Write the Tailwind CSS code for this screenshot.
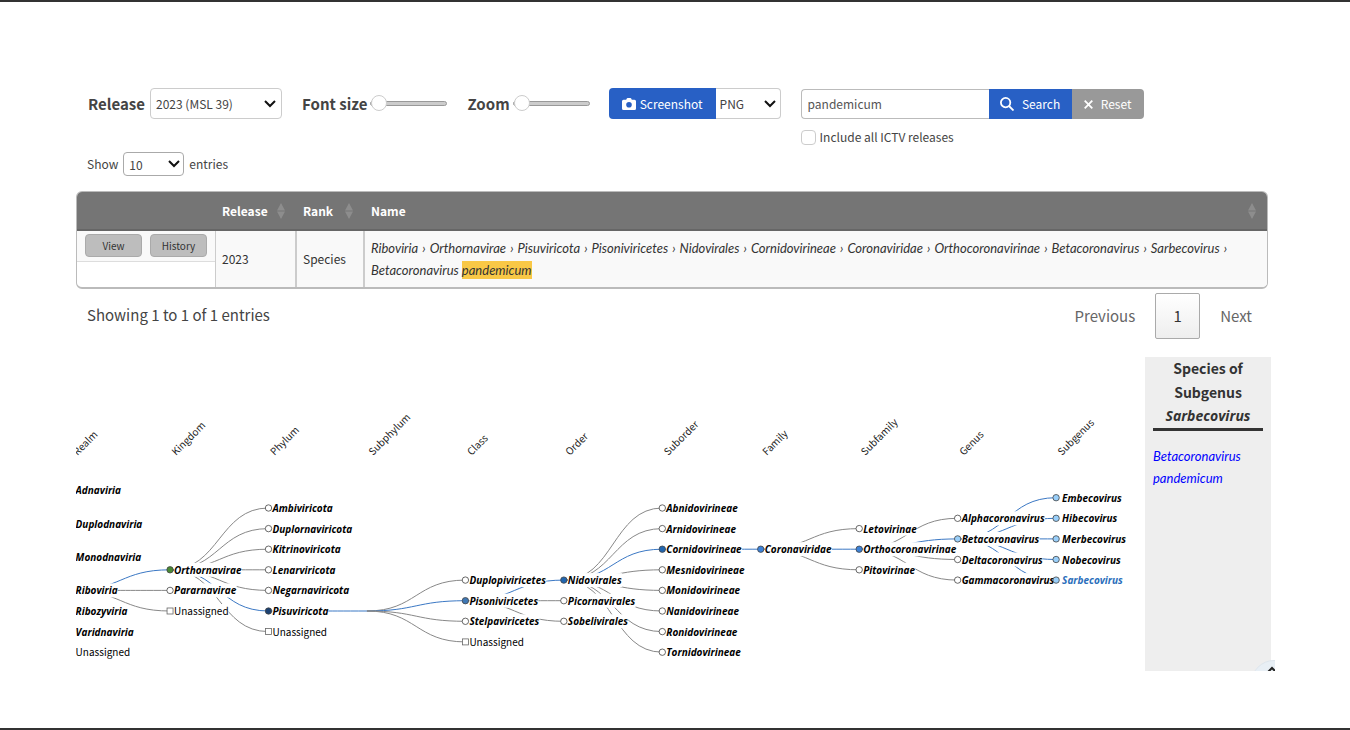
<!DOCTYPE html>
<html lang="en">
<head>
    <meta charset="UTF-8">
    <meta name="viewport" content="width=device-width, initial-scale=1.0">
    <title>Virus Taxonomy Browser</title>
    <script src="https://cdn.jsdelivr.net/npm/@tailwindcss/browser@4"></script>
</head>
<body class="min-h-screen flex flex-col bg-white border-y-2 border-[#333] font-['Noto_Sans_CJK_SC',sans-serif] text-xs text-[#444]">
    <main class="flex-1 pl-[76px] pr-[75px] pt-[86px]">

        <!-- Toolbar -->
        <div class="flex items-start pl-3">
            <label for="release" class="text-[15px] leading-[31px] font-bold">Release</label>
            <div class="relative ml-[5px]">
                <select id="release" class="appearance-none block w-[132px] h-[31px] pl-[5px] rounded border border-[#ccc] bg-white">
                    <option>2023 (MSL 39)</option>
                </select>
                <svg class="absolute right-[6px] top-[12px] w-3 h-2 pointer-events-none" viewBox="0 0 12 8" fill="none" stroke="#111" stroke-width="2"><path d="M1 1l5 5 5-5"/></svg>
            </div>
            <label for="font-size" class="ml-5 text-[15px] leading-[31px] font-bold">Font size</label>
            <input id="font-size" type="range" value="0" class="appearance-none ml-[3px] w-[77px] h-[30px] bg-transparent [&::-webkit-slider-runnable-track]:h-[5px] [&::-webkit-slider-runnable-track]:rounded-full [&::-webkit-slider-runnable-track]:border [&::-webkit-slider-runnable-track]:border-[#999] [&::-webkit-slider-runnable-track]:bg-[#ccc] [&::-webkit-slider-thumb]:appearance-none [&::-webkit-slider-thumb]:size-4 [&::-webkit-slider-thumb]:-mt-[7px] [&::-webkit-slider-thumb]:rounded-full [&::-webkit-slider-thumb]:border [&::-webkit-slider-thumb]:border-[#ccc] [&::-webkit-slider-thumb]:bg-white">
            <label for="zoom" class="ml-5 text-[15px] leading-[31px] font-bold">Zoom</label>
            <input id="zoom" type="range" value="0" class="appearance-none ml-[3px] w-[77px] h-[30px] bg-transparent [&::-webkit-slider-runnable-track]:h-[5px] [&::-webkit-slider-runnable-track]:rounded-full [&::-webkit-slider-runnable-track]:border [&::-webkit-slider-runnable-track]:border-[#999] [&::-webkit-slider-runnable-track]:bg-[#ccc] [&::-webkit-slider-thumb]:appearance-none [&::-webkit-slider-thumb]:size-4 [&::-webkit-slider-thumb]:-mt-[7px] [&::-webkit-slider-thumb]:rounded-full [&::-webkit-slider-thumb]:border [&::-webkit-slider-thumb]:border-[#ccc] [&::-webkit-slider-thumb]:bg-white">
            <button class="flex items-center justify-center gap-1 ml-[19px] w-[107px] h-[31px] rounded-l bg-[#2860c5] text-white">
                <svg class="w-[14px] h-3" viewBox="0 0 14 12" fill="white"><path fill-rule="evenodd" d="M4.2 1.8 4.8.6Q5 0 5.6 0h2.8q.6 0 .8.6l.6 1.2h2.7q1.5 0 1.5 1.5v7.2q0 1.5-1.5 1.5h-11Q0 12 0 10.500V3.300Q0 1.800 1.500 1.800zM7 4a2.800 2.800 0 1 0 0 5.600A2.800 2.800 0 0 0 7 4z"/></svg>
                Screenshot
            </button>
            <div class="relative">
                <select aria-label="Image format" class="appearance-none block w-[65px] h-[31px] pl-1 rounded-r border border-l-0 border-[#ccc] bg-white">
                    <option>PNG</option>
                </select>
                <svg class="absolute right-[5px] top-[12px] w-3 h-2 pointer-events-none" viewBox="0 0 12 8" fill="none" stroke="#111" stroke-width="2"><path d="M1 1l5 5 5-5"/></svg>
            </div>
            <div class="ml-5">
                <div class="flex h-[30px] mt-px">
                    <input type="text" value="pandemicum" aria-label="Search term" class="w-[188px] pl-[6px] rounded-l border border-r-0 border-[#bbb] text-[#555]">
                    <button class="flex items-center justify-center gap-2 w-[83px] bg-[#2860c5] text-white">
                        <svg class="size-[14px]" viewBox="0 0 14 14" fill="none" stroke="white" stroke-width="1.8"><circle cx="5.600" cy="5.600" r="4.700"/><path d="M9 9l4.500 4.500"/></svg>
                        Search
                    </button>
                    <button class="flex items-center justify-center gap-2 w-[72px] rounded-r bg-[#999] text-white">
                        <svg class="size-[9px]" viewBox="0 0 9 9" fill="none" stroke="white" stroke-width="1.800"><path d="M.700.700l7.600 7.600M8.300.700L.700 8.300"/></svg>
                        Reset
                    </button>
                </div>
                <label class="flex items-center gap-1 mt-[10px] leading-4">
                    <input type="checkbox" class="appearance-none size-[15px] rounded border border-[#ccc] bg-white">
                    Include all ICTV releases
                </label>
            </div>
        </div>

        <!-- Page length -->
        <div class="flex items-center gap-[5px] pl-[11px] mt-[7px] leading-6">
            <label for="page-length">Show</label>
            <div class="relative">
                <select id="page-length" class="appearance-none block w-[61px] h-6 pl-[5px] rounded-sm border border-[#aaa] bg-white">
                    <option>10</option>
                </select>
                <svg class="absolute right-1 top-2 w-3 h-2 pointer-events-none" viewBox="0 0 12 8" fill="none" stroke="#111" stroke-width="2"><path d="M1 1l5 5 5-5"/></svg>
            </div>
            <span>entries</span>
        </div>

        <!-- Search results -->
        <div class="mt-[15px] mr-[7px] rounded-md border border-b-2 border-[#bbb] overflow-hidden">
            <table class="w-full table-fixed border-separate border-spacing-0 text-[#333]">
                <thead>
                    <tr class="h-[39px] bg-[#757575] text-left text-white">
                        <th class="w-[138px] border-b-2 border-[#666]"></th>
                        <th class="w-[80px] pl-[7px] pr-[10px] border-b-2 border-[#666]">
                            <div class="flex items-center justify-between">Release <svg class="w-2 h-4" viewBox="0 0 8 16" fill="#8d8d8d"><path d="M0 7.500L4 0l4 7.500zM0 8.500L4 16l4-7.500z"/></svg></div>
                        </th>
                        <th class="w-[68px] pl-2 pr-[10px] border-b-2 border-[#666]">
                            <div class="flex items-center justify-between">Rank <svg class="w-2 h-4" viewBox="0 0 8 16" fill="#8d8d8d"><path d="M0 7.500L4 0l4 7.500zM0 8.500L4 16l4-7.500z"/></svg></div>
                        </th>
                        <th class="pl-2 pr-[11px] border-b-2 border-[#666]">
                            <div class="flex items-center justify-between">Name <svg class="w-2 h-4" viewBox="0 0 8 16" fill="#8d8d8d"><path d="M0 7.500L4 0l4 7.500zM0 8.500L4 16l4-7.500z"/></svg></div>
                        </th>
                    </tr>
                </thead>
                <tbody>
                    <tr class="h-14">
                        <td class="align-top">
                            <div class="flex gap-2 h-[31px] pl-2 pt-[3px] border-b border-[#ddd] bg-[#f9f9f9] text-[10px]">
                                <button class="w-[57px] h-[23px] rounded-sm border border-[#aaa] bg-[#bdbdbd]">View</button>
                                <button class="w-[57px] h-[23px] rounded-sm border border-[#aaa] bg-[#bdbdbd]">History</button>
                            </div>
                        </td>
                        <td class="pl-[6px] border-l border-[#ccc] bg-[#f9f9f9]">2023</td>
                        <td class="pl-[6px] border-l-2 border-[#ccc] bg-[#f9f9f9]">Species</td>
                        <td class="pl-[6px] pr-5 border-l-2 border-[#ccc] bg-[#f9f9f9] leading-[22px] italic font-[Lato,sans-serif] text-[13px]">
                            Riboviria <span class="mx-px">›</span> Orthornavirae <span class="mx-px">›</span> Pisuviricota <span class="mx-px">›</span> Pisoniviricetes <span class="mx-px">›</span> Nidovirales <span class="mx-px">›</span> Cornidovirineae <span class="mx-px">›</span> Coronaviridae <span class="mx-px">›</span> Orthocoronavirinae <span class="mx-px">›</span> Betacoronavirus <span class="mx-px">›</span> Sarbecovirus <span class="mx-px">›</span>
                            <div>Betacoronavirus <mark class="py-px bg-[#f9c846] text-inherit">pandemicum</mark></div>
                        </td>
                    </tr>
                </tbody>
            </table>
        </div>

        <div class="flex justify-between mt-1 pl-[11px] pr-[7px] text-[15px]">
            <p class="leading-[44px]">Showing 1 to 1 of 1 entries</p>
            <nav class="flex items-center text-[#666]">
                <a href="#" class="px-5">Previous</a>
                <a href="#" class="w-[45px] h-[46px] leading-[44px] text-center rounded-xs border border-[#aaa] bg-linear-to-b from-white to-[#eee] text-[#333]">1</a>
                <a href="#" class="pl-5 pr-4">Next</a>
            </nav>
        </div>

        <!-- Taxonomy tree and species panel -->
        <div class="relative flex mt-[18px] overflow-hidden">
            <div class="flex-1 min-w-0">
                <svg id="tree" class="block w-full" viewBox="76 357 1069 314"></svg>
            </div>
            <aside class="w-[126px] mr-1 px-2 bg-[#eee]">
                <h2 class="-mt-px text-center text-sm leading-6 font-bold text-[#333] border-b-3 border-[#333]">Species of<br>Subgenus <em class="block font-['Open_Sans',sans-serif]">Sarbecovirus</em></h2>
                <a href="#" class="block mt-[14px] leading-[22px] italic font-[Lato,sans-serif] text-[13px] text-[#00f]">Betacoronavirus pandemicum</a>
            </aside>
            <a href="#" aria-label="Back to top" class="absolute -right-[22px] -bottom-[35px] size-[46px] rounded-full border border-[#dde5ec] bg-[#e8eff5]">
                <svg class="absolute left-[15px] top-[5px] w-[10px] h-2" viewBox="0 0 10 8" fill="none" stroke="#222" stroke-width="2"><path d="M1 6l4-4 4 4"/></svg>
            </a>
        </div>
    </main>

    <script>
        const svg = document.getElementById("tree");
        const BLUE = "#3b78c4", GRAY = "#888";

        // left edge of each rank, and the rows its taxa sit on
        const ranks = ["Realm", "Kingdom", "Phylum", "Subphylum", "Class", "Order", "Suborder", "Family", "Subfamily", "Genus", "Subgenus"];
        const colX = i => 71.6 + i * 98.45;
        const rowY = r => 508 + r * 20.6;

        // [rank, row, name, fill]
        const nodes = [
            [0, -0.85, "Adnaviria"], [0, 0.78, "Duplodnaviria"], [0, 2.4, "Monodnaviria"], [0, 4, "Riboviria"],
            [0, 5, "Ribozyviria"], [0, 6, "Varidnaviria"], [0, 7, "Unassigned"],
            [1, 3, "Orthornavirae", "#4a8a33"], [1, 4, "Pararnavirae"], [1, 5, "Unassigned"],
            [2, 0, "Ambiviricota"], [2, 1, "Duplornaviricota"], [2, 2, "Kitrinoviricota"], [2, 3, "Lenarviricota"],
            [2, 4, "Negarnaviricota"], [2, 5, "Pisuviricota", "#1b4172"], [2, 6, "Unassigned"],
            [4, 3.5, "Duplopiviricetes"], [4, 4.5, "Pisoniviricetes", "#3f78b5"], [4, 5.5, "Stelpaviricetes"], [4, 6.5, "Unassigned"],
            [5, 3.5, "Nidovirales", "#2166b0"], [5, 4.5, "Picornavirales"], [5, 5.5, "Sobelivirales"],
            [6, 0, "Abnidovirineae"], [6, 1, "Arnidovirineae"], [6, 2, "Cornidovirineae", "#2166b0"], [6, 3, "Mesnidovirineae"],
            [6, 4, "Monidovirineae"], [6, 5, "Nanidovirineae"], [6, 6, "Ronidovirineae"], [6, 7, "Tornidovirineae"],
            [7, 2, "Coronaviridae", "#3d82d8"],
            [8, 1, "Letovirinae"], [8, 2, "Orthocoronavirinae", "#3d82d8"], [8, 3, "Pitovirinae"],
            [9, 0.5, "Alphacoronavirus"], [9, 1.5, "Betacoronavirus", "#99cffa"], [9, 2.5, "Deltacoronavirus"], [9, 3.5, "Gammacoronavirus"],
            [10, -0.5, "Embecovirus", "#99cffa"], [10, 0.5, "Hibecovirus", "#99cffa"], [10, 1.5, "Merbecovirus", "#99cffa"],
            [10, 2.5, "Nobecovirus", "#99cffa"], [10, 3.5, "Sarbecovirus", "#99cffa"]
        ];

        // [rank, row, child rows, rows on the selected path]
        const links = [
            [0, 4, [3, 4, 5], [3]],
            [1, 3, [0, 1, 2, 3, 4, 5, 6], [5]],
            [2, 5, [5], [5]],
            [3, 5, [3.5, 4.5, 5.5, 6.5], [4.5]],
            [4, 4.5, [3.5, 4.5, 5.5], [3.5]],
            [5, 3.5, [0, 1, 2, 3, 4, 5, 6, 7], [2]],
            [6, 2, [2], [2]],
            [7, 2, [1, 2, 3], [2]],
            [8, 2, [0.5, 1.5, 2.5, 3.5], [1.5]],
            [9, 1.5, [-0.5, 0.5, 1.5, 2.5, 3.5], [-0.5, 0.5, 1.5, 2.5, 3.5]]
        ];

        function add(tag, attrs, text) {
            const el = document.createElementNS("http://www.w3.org/2000/svg", tag);
            for (const key in attrs) el.setAttribute(key, attrs[key]);
            if (text) el.textContent = text;
            svg.appendChild(el);
            return el;
        }

        function drawTree() {
            ranks.forEach((name, i) => {
                const x = colX(i) + 6;
                add("text", { class: "text-[10px]", fill: "#222", transform: `translate(${x} 456) rotate(-45)` }, name);
            });

            links.forEach(([rank, row, children, selected]) => {
                const x1 = colX(rank), x2 = colX(rank + 1), mid = (x1 + x2) / 2;
                children.forEach(child => add("path", {
                    d: `M${x1} ${rowY(row)}C${mid} ${rowY(row)} ${mid} ${rowY(child)} ${x2} ${rowY(child)}`,
                    fill: "none",
                    stroke: selected.includes(child) ? BLUE : GRAY
                }));
            });

            nodes.forEach(([rank, row, name, fill]) => {
                const x = colX(rank), y = rowY(row), plain = name === "Unassigned";
                const label = add("text", {
                    x: x + (rank === 10 ? 6 : 4),
                    y: y + 4,
                    "font-size": 10,
                    class: plain ? "" : "font-bold italic font-['Open_Sans',sans-serif]",
                    fill: name === "Sarbecovirus" ? "#2a6ebb" : "#000"
                }, name);
                // white plate that hides the links behind the label
                const box = label.getBBox();
                const plate = add("rect", { x: box.x, y: y - 7, width: box.width, height: 14, fill: "#fff" });
                svg.insertBefore(plate, label);
                if (rank === 0) return;
                if (plain) add("rect", { x: x - 3, y: y - 3, width: 6, height: 6, fill: "#fff", stroke: "#666", "stroke-width": 0.8 });
                else add("circle", { cx: x, cy: y, r: 3.2, fill: fill || "#fff", stroke: "#444", "stroke-width": 0.8 });
            });
        }

        // label widths are only right once the stylesheet is in
        window.addEventListener("load", drawTree);
    </script>
</body>
</html>
